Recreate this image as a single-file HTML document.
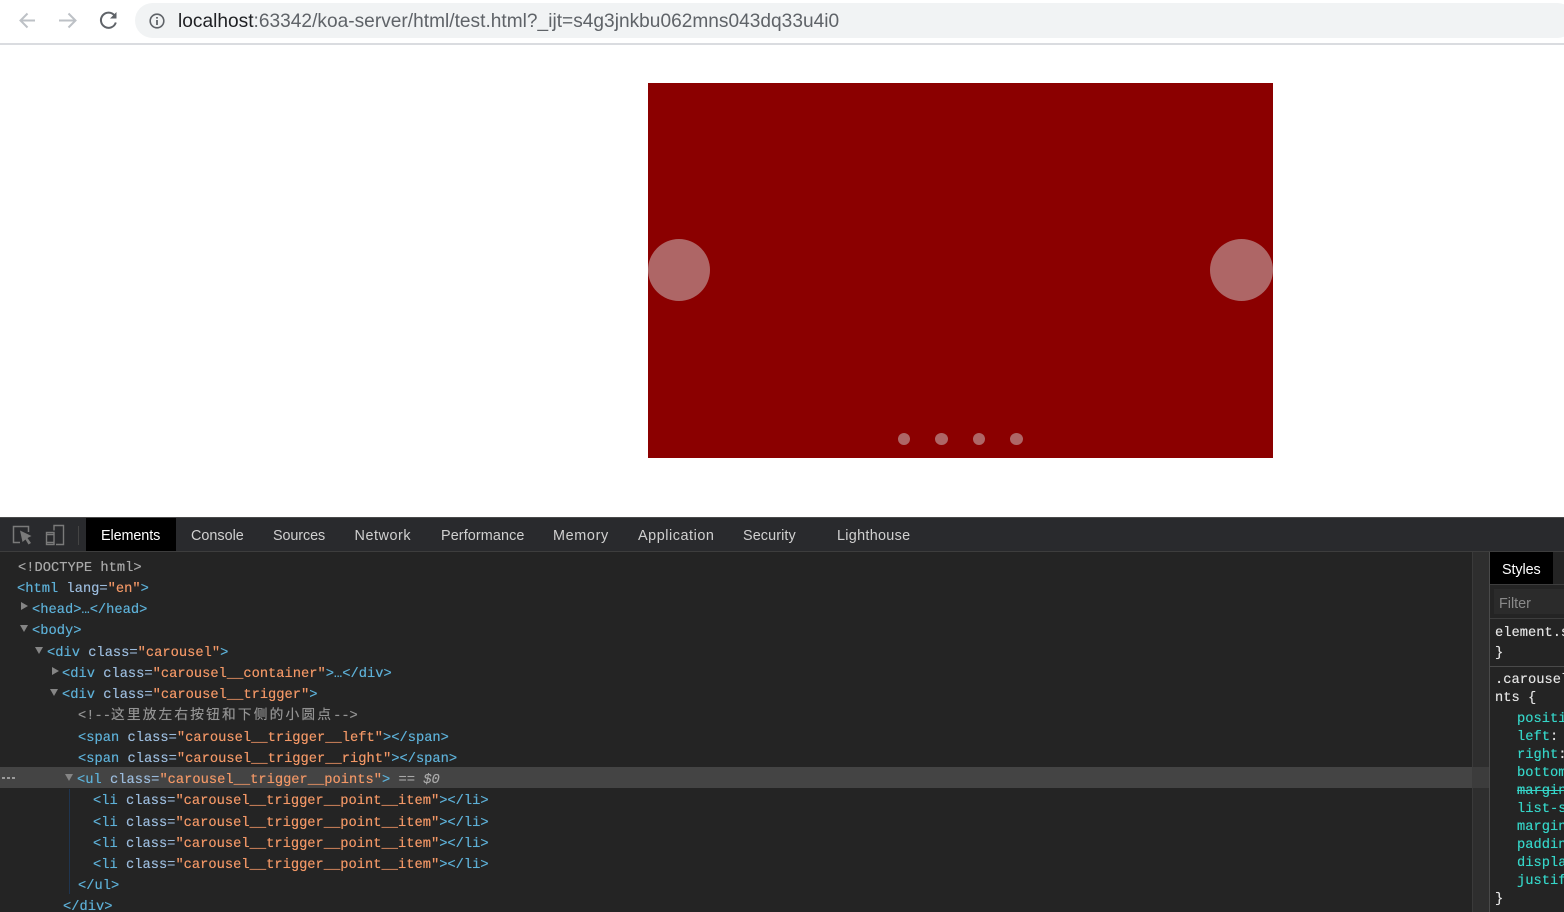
<!DOCTYPE html>
<html lang="en"><head><meta charset="utf-8"><title>test</title>
<style>
html,body{margin:0;padding:0;width:1564px;height:912px;overflow:hidden;background:#fff}
body{position:relative;font-family:"Liberation Sans","Noto Sans CJK SC",sans-serif}
div,span.a{position:absolute}
.urlbar{left:135px;top:3px;width:1440px;height:35px;border-radius:18px;background:#f1f3f4}
.url{left:178px;top:10px;font-size:19.1px;line-height:23px;color:#5f6368;white-space:pre;letter-spacing:.02px}
.url b{font-weight:normal;color:#202124}
.sep{left:0;top:43px;width:1564px;height:2px;background:#dadce0}
.car{left:648px;top:83px;width:625px;height:375px;background:#8b0000}
.c{border-radius:50%;background:#ae6666}
.dev{left:0;top:517px;width:1564px;height:395px;background:#242424}
.bar{left:0;top:518px;width:1564px;height:33px;background:#292a2d;border-bottom:1px solid #3d3d3d}
.bt{left:0;top:517px;width:1564px;height:1px;background:#4a4a4a}
.tab{top:527px;font-size:14.4px;line-height:18px;color:#d0d0d0;white-space:pre}
.l{font:13.74px/18px "Liberation Mono","Noto Sans CJK SC",monospace;white-space:pre;color:#9bbbdc;left:0;text-shadow:0 0 .4px currentColor}
.t{color:#5db0d7}
.v{color:#f29766}
.g{color:#a8a8a8}
.arrow{width:0;height:0}
.ad{border-left:4.5px solid transparent;border-right:4.5px solid transparent;border-top:7px solid #858585}
.ar{border-top:4.500px solid transparent;border-bottom:4.500px solid transparent;border-left:7px solid #858585}
.p{color:#35d4c7;font:13.74px/18px "Liberation Mono",monospace;left:1517px;white-space:pre;text-shadow:0 0 .4px currentColor}
.w{color:#e3e3e3;font:13.74px/18px "Liberation Mono",monospace;left:1495px;white-space:pre;text-shadow:0 0 .4px currentColor}
</style></head><body>

<svg style="position:absolute;left:0;top:0" width="130" height="42" viewBox="0 0 130 42" fill="none">
<path d="M35 20.500H21M27.500 13.500L20.500 20.500L27.500 27.500" stroke="#bdc1c6" stroke-width="2"/>
<path d="M59 20.500H75M68.500 13.500L75.500 20.500L68.500 27.500" stroke="#bdc1c6" stroke-width="2"/>
<path d="M114.500 15.500A7.600 7.600 0 1 0 115.800 22.500" stroke="#5f6368" stroke-width="2"/>
<path d="M116.500 12V18.500H110Z" fill="#5f6368"/>
</svg>
<div class="urlbar"></div>
<svg style="position:absolute;left:148px;top:11.500px" width="18" height="18" viewBox="0 0 18 18" fill="none">
<circle cx="9" cy="9" r="6.800" stroke="#5f6368" stroke-width="1.600"/>
<path d="M9 8V13" stroke="#5f6368" stroke-width="1.800"/><path d="M9 5V6.600" stroke="#5f6368" stroke-width="1.800"/>
</svg>
<div class="url"><b>localhost</b>:63342/koa-server/html/test.html?_ijt=s4g3jnkbu062mns043dq33u4i0</div>
<div class="sep"></div>

<div class="car"></div>
<div class="c" style="left:648px;top:239px;width:62px;height:62px"></div>
<div class="c" style="left:1210px;top:239px;width:63px;height:62px"></div>
<div class="c" style="left:898px;top:433px;width:12px;height:12px"></div>
<div class="c" style="left:935px;top:433px;width:13px;height:12px"></div>
<div class="c" style="left:973px;top:433px;width:12px;height:12px"></div>
<div class="c" style="left:1010px;top:433px;width:13px;height:12px"></div>

<div class="dev"></div>
<div class="bt"></div>
<div class="bar"></div>
<svg style="position:absolute;left:10px;top:522px" width="70" height="26" viewBox="0 0 70 26" fill="none">
<path d="M10 20.500H3.500V4.500H18.500V10" stroke="#7a7a7a" stroke-width="1.500"/>
<path d="M10 8.500L21.500 14L17.500 16L21 21L18.500 22.500L15.500 17.500L12.500 20Z" fill="#7a7a7a"/>
<path d="M44 8.500V3.500H53.500V22.500H46" stroke="#7a7a7a" stroke-width="1.400"/>
<rect x="36.500" y="10.500" width="7.500" height="12" stroke="#7a7a7a" stroke-width="1.400"/>
<path d="M36.500 12.500H44M36.500 20.500H44" stroke="#7a7a7a" stroke-width="1.400"/>
<path d="M68.500 4V23" stroke="#444" stroke-width="1"/>
</svg>
<div style="left:86px;top:518px;width:90px;height:33px;background:#000"></div>
<div class="tab" style="left:101px;color:#fff;letter-spacing:-.1px">Elements</div>
<div class="tab" style="left:191px">Console</div>
<div class="tab" style="left:273px;letter-spacing:-.1px">Sources</div>
<div class="tab" style="left:354.500px;letter-spacing:.55px">Network</div>
<div class="tab" style="left:441px;letter-spacing:.1px">Performance</div>
<div class="tab" style="left:553px;letter-spacing:.65px">Memory</div>
<div class="tab" style="left:638px;letter-spacing:.55px">Application</div>
<div class="tab" style="left:743px;letter-spacing:.1px">Security</div>
<div class="tab" style="left:837px;letter-spacing:.3px">Lighthouse</div>

<div style="left:0;top:767px;width:1473px;height:21px;background:#444"></div>
<div style="left:69px;top:789px;width:1px;height:105px;background:#1f3550"></div>
<div style="left:2px;top:777px;width:3px;height:2px;background:#9a9a9a"></div>
<div style="left:7px;top:777px;width:3px;height:2px;background:#9a9a9a"></div>
<div style="left:12px;top:777px;width:3px;height:2px;background:#9a9a9a"></div>

<div class="arrow ar" style="left:21px;top:602px"></div>
<div class="arrow ad" style="left:20px;top:625px"></div>
<div class="arrow ad" style="left:35px;top:647px"></div>
<div class="arrow ar" style="left:51.500px;top:666.500px"></div>
<div class="arrow ad" style="left:50px;top:689px"></div>
<div class="arrow ad" style="left:65px;top:774px"></div>

<div class="l g" style="left:18px;top:560px">&lt;!DOCTYPE html&gt;</div>
<div class="l" style="left:17px;top:581px"><span class="t">&lt;html</span> lang=<span class="v">"en"</span><span class="t">&gt;</span></div>
<div class="l t" style="left:32px;top:602px">&lt;head&gt;…&lt;/head&gt;</div>
<div class="l t" style="left:32px;top:623px">&lt;body&gt;</div>
<div class="l" style="left:47px;top:645px"><span class="t">&lt;div</span> class=<span class="v">"carousel"</span><span class="t">&gt;</span></div>
<div class="l" style="left:62px;top:666px"><span class="t">&lt;div</span> class=<span class="v">"carousel__container"</span><span class="t">&gt;…&lt;/div&gt;</span></div>
<div class="l" style="left:62px;top:687px"><span class="t">&lt;div</span> class=<span class="v">"carousel__trigger"</span><span class="t">&gt;</span></div>
<div class="l g" style="left:78px;top:708px;color:#949494">&lt;!--<span style="letter-spacing:2.13px">这里放左右按钮和下侧的小圆点</span>--&gt;</div>
<div class="l" style="left:78px;top:730px"><span class="t">&lt;span</span> class=<span class="v">"carousel__trigger__left"</span><span class="t">&gt;&lt;/span&gt;</span></div>
<div class="l" style="left:78px;top:751px"><span class="t">&lt;span</span> class=<span class="v">"carousel__trigger__right"</span><span class="t">&gt;&lt;/span&gt;</span></div>
<div class="l" style="left:77px;top:772px"><span class="t">&lt;ul</span> class=<span class="v">"carousel__trigger__points"</span><span class="t">&gt;</span> <span class="g">==</span> <i class="g">$0</i></div>
<div class="l" style="left:93px;top:793px"><span class="t">&lt;li</span> class=<span class="v">"carousel__trigger__point__item"</span><span class="t">&gt;&lt;/li&gt;</span></div>
<div class="l" style="left:93px;top:815px"><span class="t">&lt;li</span> class=<span class="v">"carousel__trigger__point__item"</span><span class="t">&gt;&lt;/li&gt;</span></div>
<div class="l" style="left:93px;top:836px"><span class="t">&lt;li</span> class=<span class="v">"carousel__trigger__point__item"</span><span class="t">&gt;&lt;/li&gt;</span></div>
<div class="l" style="left:93px;top:857px"><span class="t">&lt;li</span> class=<span class="v">"carousel__trigger__point__item"</span><span class="t">&gt;&lt;/li&gt;</span></div>
<div class="l t" style="left:78px;top:878px">&lt;/ul&gt;</div>
<div class="l t" style="left:63px;top:899px">&lt;/div&gt;</div>

<div style="left:1472px;top:552px;width:17px;height:360px;background:#2e2e2e;border-left:1px solid #3a3a3a"></div>
<div style="left:1472px;top:767px;width:17px;height:21px;background:#3c3c3c"></div>
<div style="left:1489px;top:552px;width:1px;height:360px;background:#4a4a4a"></div>
<div style="left:1490px;top:552px;width:74px;height:360px;background:#242424;overflow:hidden"></div>
<div style="left:1490px;top:552px;width:63px;height:32px;background:#000"></div>
<div style="left:1490px;top:584px;width:74px;height:1px;background:#3d3d3d"></div>
<div class="tab" style="left:1502px;top:561px;color:#fff;letter-spacing:-.1px">Styles</div>
<div style="left:1494px;top:589px;width:70px;height:25px;background:#2b2b2b"></div>
<div class="tab" style="left:1499px;top:595px;color:#8a8a8a">Filter</div>
<div style="left:1490px;top:618px;width:74px;height:1px;background:#3d3d3d"></div>
<div style="left:1490px;top:666px;width:74px;height:1px;background:#4a4a4a"></div>
<div class="w" style="top:625px">element.s</div>
<div class="w" style="top:645px">}</div>
<div class="w" style="top:672px">.carousel</div>
<div class="w" style="top:690px">nts {</div>
<div class="p" style="top:711px">positi</div>
<div class="p" style="top:729px">left<span style="color:#e3e3e3">:</span></div>
<div class="p" style="top:747px">right<span style="color:#e3e3e3">:</span></div>
<div class="p" style="top:765px">bottom</div>
<div class="p" style="top:783px;text-decoration:line-through">margin</div>
<div class="p" style="top:801px">list-s</div>
<div class="p" style="top:819px">margin</div>
<div class="p" style="top:837px">paddin</div>
<div class="p" style="top:855px">displa</div>
<div class="p" style="top:873px">justif</div>
<div class="w" style="top:891px">}</div>
</body></html>
